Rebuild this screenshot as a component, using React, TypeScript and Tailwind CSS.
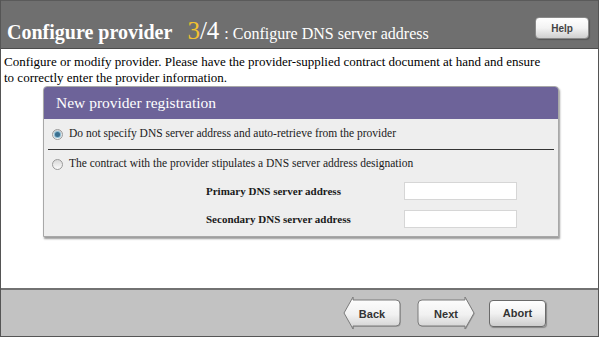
import React, { useState } from 'react';

const ArrowButton: React.FC<{ label: string; dir: 'left' | 'right' }> = ({ label, dir }) => {
  const d =
    dir === 'left'
      ? 'M10 1 L10 4 L53 4 Q57 4 57 8 L57 26 Q57 30 53 30 L10 30 L10 33 L1 17 Z'
      : 'M48 1 L48 4 L5 4 Q1 4 1 8 L1 26 Q1 30 5 30 L48 30 L48 33 L57 17 Z';
  const id = `grad-${dir}`;
  return (
    <button className="relative w-[58px] h-[34px] cursor-pointer">
      <svg width="58" height="34" viewBox="0 0 58 34" className="absolute inset-0">
        <defs>
          <linearGradient id={id} x1="0" y1="0" x2="0" y2="1">
            <stop offset="0" stopColor="#ffffff" />
            <stop offset="0.55" stopColor="#f1f1f1" />
            <stop offset="1" stopColor="#cfcfcf" />
          </linearGradient>
        </defs>
        <path d={d} fill="#9a9a9a" transform="translate(0.8 0.8)" />
        <path d={d} fill={`url(#${id})`} stroke="#7b7b7b" strokeWidth="1" strokeLinejoin="round" />
      </svg>
      <span className="relative text-[11px] font-bold text-[#333] font-['Liberation_Sans',Arial,sans-serif]">
        {label}
      </span>
    </button>
  );
};

const Radio: React.FC<{ checked: boolean; onClick: () => void }> = ({ checked, onClick }) => (
  <span
    onClick={onClick}
    className="w-[11px] h-[11px] rounded-full border border-[#9a9a9a] bg-gradient-to-b from-[#d8d8d8] to-[#fbfbfb] flex items-center justify-center shrink-0 cursor-pointer"
  >
    {checked && <span className="w-[5px] h-[5px] rounded-full bg-[#3a6f8f] shadow-[0_0_1px_1px_#7fb5cf]" />}
  </span>
);

export default function App() {
  const [mode, setMode] = useState<'auto' | 'manual'>('auto');
  const [primary, setPrimary] = useState('');
  const [secondary, setSecondary] = useState('');

  return (
    <div className="w-[599px] h-[337px] flex flex-col border-x border-[#555] font-['Liberation_Serif','Times_New_Roman',serif] overflow-hidden">
      {/* Header */}
      <div className="h-[49px] shrink-0 bg-[#6f6f6f] border-t border-[#5a5a5a] border-b border-b-[#4c4c4c] flex items-start">
        <div className="flex items-baseline mt-[17px] ml-[6px] text-white leading-none">
          <span className="text-[20px] font-bold">Configure provider</span>
          <span className="text-[25px] ml-[15px] text-[#f2c230]">3</span>
          <span className="text-[25px]">/4</span>
          <span className="text-[16px] ml-[5px]">: Configure DNS server address</span>
        </div>
        <button className="ml-auto mt-[16px] mr-[9px] w-[54px] h-[22px] rounded-[4px] border border-[#8a8a8a] bg-gradient-to-b from-white via-[#f3f3f3] to-[#cfcfcf] shadow-[1px_1px_1px_#555] text-[10px] font-bold text-[#444] font-['Liberation_Sans',Arial,sans-serif]">
          Help
        </button>
      </div>

      {/* Content */}
      <div className="flex-1 bg-white pt-[5px] pl-[3px]">
        <p className="text-[13px] leading-[16px] text-black">
          Configure or modify provider. Please have the provider-supplied contract document at hand and ensure
          <br />
          to correctly enter the provider information.
        </p>

        <div className="ml-[39px] w-[516px] bg-[#eeeeee] border border-[#a8a8a8] rounded-t-[4px] shadow-[1px_2px_2px_#9a9a9a]">
          <div className="h-[32px] bg-[#6d6399] rounded-t-[3px] flex items-center pl-[12px] text-white text-[15.5px]">
            New provider registration
          </div>
          <div className="h-[30px] flex items-center pl-[8px] gap-[6px] text-[11.5px] text-[#1a1a1a]">
            <Radio checked={mode === 'auto'} onClick={() => setMode('auto')} />
            <span>Do not specify DNS server address and auto-retrieve from the provider</span>
          </div>
          <div className="mx-[4px] h-px bg-[#333]" />
          <div className="h-[28px] flex items-center pl-[8px] gap-[6px] text-[11.5px] text-[#1a1a1a]">
            <Radio checked={mode === 'manual'} onClick={() => setMode('manual')} />
            <span>The contract with the provider stipulates a DNS server address designation</span>
          </div>
          <div className="pt-[4px] pb-[8px] pl-[162px] flex flex-col gap-[10px] text-[11px] font-bold text-[#1a1a1a]">
            <div className="flex items-center h-[18px]">
              <span className="w-[198px]">Primary DNS server address</span>
              <input
                value={primary}
                onChange={e => setPrimary(e.target.value)}
                className="w-[113px] h-[18px] bg-white border border-[#d6d6d6] outline-none"
              />
            </div>
            <div className="flex items-center h-[18px]">
              <span className="w-[198px]">Secondary DNS server address</span>
              <input
                value={secondary}
                onChange={e => setSecondary(e.target.value)}
                className="w-[113px] h-[18px] bg-white border border-[#d6d6d6] outline-none"
              />
            </div>
          </div>
        </div>
      </div>

      {/* Footer */}
      <div className="h-[49px] shrink-0 bg-[#c2c2c2] border-t-2 border-[#727272] border-b border-b-[#555] flex items-center justify-end pr-[52px]">
        <ArrowButton label="Back" dir="left" />
        <div className="ml-[16px]">
          <ArrowButton label="Next" dir="right" />
        </div>
        <button className="ml-[14px] w-[57px] h-[27px] rounded-[4px] border border-[#6a6a6a] bg-gradient-to-b from-white via-[#f1f1f1] to-[#cdcdcd] shadow-[1px_1px_1px_#888] text-[11px] font-bold text-[#333] font-['Liberation_Sans',Arial,sans-serif]">
          Abort
        </button>
      </div>
    </div>
  );
}
